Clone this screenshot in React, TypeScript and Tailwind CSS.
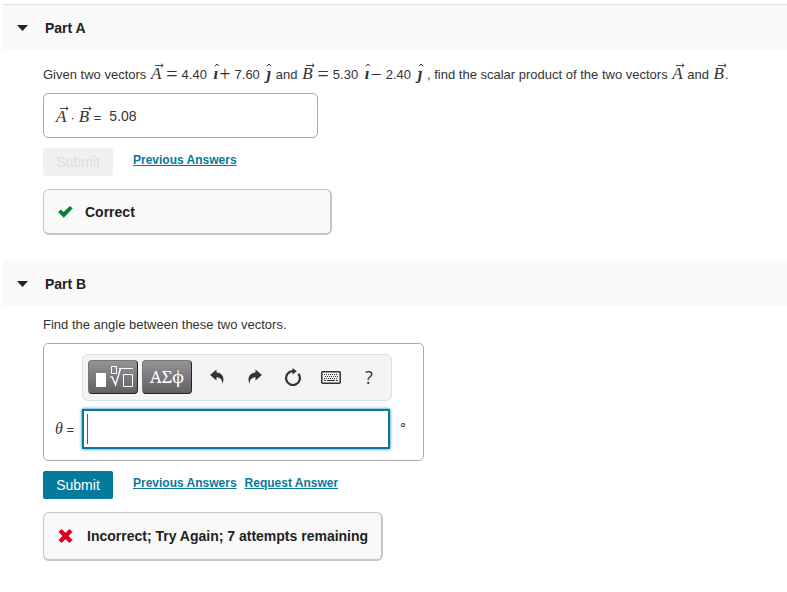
import React from "react";

interface MathSymbolProps {
  children: React.ReactNode;
}

const symbolFont = "font-['Liberation_Serif',serif] text-[17px] leading-none italic";

// Italic vector name with an arrow on top
const Vector: React.FC<MathSymbolProps> = ({ children }) => (
  <span className={`relative mx-px inline-block ${symbolFont}`}>
    {children}
    <svg
      className="absolute -top-0.5 left-1 h-[5px] w-[9px]"
      viewBox="0 0 9 5"
      fill="none"
      stroke="currentColor"
      aria-hidden="true"
    >
      <path d="M0 2.5H8M6 .7L8.2 2.5L6 4.3" strokeWidth=".9" />
    </svg>
  </span>
);

// Unit vector: dotless letter with a hat
const UnitVector: React.FC<MathSymbolProps> = ({ children }) => (
  <span className={`relative mr-px ml-[3px] inline-block font-bold ${symbolFont}`}>
    {children}
    <svg
      className="absolute -top-0.5 left-0 h-[4px] w-[6px]"
      viewBox="0 0 6 4"
      fill="none"
      stroke="currentColor"
      aria-hidden="true"
    >
      <path d="M1 3.2L3 1L5 3.2" />
    </svg>
  </span>
);

const Operator: React.FC<{ children: React.ReactNode; tight?: boolean }> = ({
  children,
  tight,
}) => (
  <span
    className={`mr-1 inline-block align-[-2px] font-['Liberation_Serif',serif] text-[20px] leading-none ${
      tight ? "" : "ml-1"
    }`}
  >
    {children}
  </span>
);

const PartHeader: React.FC<{ title: string; className?: string }> = ({
  title,
  className = "",
}) => (
  <h2 className={`bg-[#f9f9f9] ${className}`}>
    <button
      type="button"
      className="flex h-[45px] w-full items-center gap-[17px] pl-[14px] text-left text-[14px] font-bold text-[#222]"
    >
      <svg className="h-[6px] w-[11px]" viewBox="0 0 11 6" aria-hidden="true">
        <path d="M0 0H11L5.5 6Z" fill="#222" />
      </svg>
      {title}
    </button>
  </h2>
);

const TextLink: React.FC<{ children: React.ReactNode }> = ({ children }) => (
  <a href="#" className="text-[12px] leading-6 font-bold text-[#047a9c] underline">
    {children}
  </a>
);

const ToolButton: React.FC<{ label: string; children: React.ReactNode }> = ({
  label,
  children,
}) => (
  <button
    type="button"
    aria-label={label}
    className="flex h-[34px] w-[38px] items-center justify-center text-[#333]"
  >
    {children}
  </button>
);

const keypadButton =
  "flex h-[34px] w-[50px] items-center justify-center rounded-[4px] border border-[#222] border-t-[#777] border-l-[#777] bg-linear-to-b from-[#92929a] to-[#626262] text-white";

export default function App() {
  return (
    <main className="bg-white pt-1 pb-8 pl-[3px] font-['Liberation_Sans',Arial,sans-serif] text-[13px] leading-5 text-[#333]">
      <section>
        <PartHeader title="Part A" className="border-t border-[#ddd]" />
        <div className="pr-4 pl-10">
          <p className="pt-[14px]">
            Given two vectors <Vector>A</Vector>
            <Operator>=</Operator>4.40 <UnitVector>ı</UnitVector>
            <Operator tight>+</Operator>7.60 <UnitVector>ȷ</UnitVector> and{" "}
            <Vector>B</Vector>
            <Operator>=</Operator>5.30 <UnitVector>ı</UnitVector>
            <Operator tight>−</Operator>2.40 <UnitVector>ȷ</UnitVector> , find the
            scalar product of the two vectors <Vector>A</Vector> and{" "}
            <Vector>B</Vector>.
          </p>

          <div className="mt-2 flex h-[45px] max-w-[275px] items-center rounded-[5px] border border-[#aaa] px-[11px]">
            <span className="pt-1">
              <Vector>A</Vector>
              <span className="mx-[3px]">·</span>
              <Vector>B</Vector> =
            </span>
            <output className="ml-2 text-[14px]">5.08</output>
          </div>

          <div className="mt-[10px] flex items-start gap-5">
            <button
              type="button"
              disabled
              className="h-7 w-[70px] rounded-[2px] bg-[#f0f0f0] text-[14px] text-[#ddd]"
            >
              Submit
            </button>
            <TextLink>Previous Answers</TextLink>
          </div>

          <div className="mt-[13px] flex h-[46px] max-w-[289px] items-center gap-3 rounded-[6px] border border-r-2 border-b-2 border-[#c7c7c7] bg-[#f9f9f9] pl-[14px] text-[14px] font-bold text-[#222]">
            <svg className="h-[12px] w-[15px]" viewBox="0 0 15 12" aria-hidden="true">
              <path d="M0 6L3 3.4L5.6 6L12 0L14.8 2.200L5.8 11.8Z" fill="#038238" />
            </svg>
            Correct
          </div>
        </div>
      </section>

      <section className="mt-[26px]">
        <PartHeader title="Part B" />
        <div className="pr-4 pl-10">
          <p className="pt-[9px]">Find the angle between these two vectors.</p>

          <div className="mt-2 max-w-[381px] rounded-[5px] border border-[#aaa] px-[10px] pt-[10px] pb-[11px]">
            <div
              role="toolbar"
              aria-label="Equation tools"
              className="ml-7 flex h-[47px] max-w-[310px] items-center rounded-[6px] border border-[#ddd] bg-[#f4f4f4] pb-px pl-[5px]"
            >
              <button type="button" aria-label="Templates" className={keypadButton}>
                <svg
                  className="h-[24px] w-[40px]"
                  viewBox="0 0 40 24"
                  fill="none"
                  stroke="white"
                  aria-hidden="true"
                >
                  <path d="M3 8H13V22H3Z" fill="white" stroke="none" />
                  <path d="M18.5 1.5H23.5V8.5H18.5ZM30.5 9.5H39.5V21.5H30.5Z" />
                  <path d="M17 12.5L19 11.5M26 3.500H40" />
                  <path d="M19 11.5L22.5 20L27.5 3.500" strokeWidth="1.400" />
                </svg>
              </button>
              <button
                type="button"
                className={`ml-1 font-['Noto_Serif','DejaVu_Serif',serif] text-[17px] ${keypadButton}`}
              >
                ΑΣϕ
              </button>
              <div className="ml-[6px] flex">
                <ToolButton label="Undo">
                  <svg className="h-4 w-4" viewBox="0 0 16 16" fill="currentColor" aria-hidden="true">
                    <path d="M1 6L7.500 .5V3.500C13.500 3.800 16 9 13.500 15C13.300 10.500 11 8.300 7.500 8.300V11.500Z" />
                  </svg>
                </ToolButton>
                <ToolButton label="Redo">
                  <svg className="h-4 w-4" viewBox="0 0 16 16" fill="currentColor" aria-hidden="true">
                    <path d="M15 6L8.500 .5V3.500C2.500 3.800 0 9 2.500 15C2.700 10.500 5 8.300 8.500 8.300V11.500Z" />
                  </svg>
                </ToolButton>
                <ToolButton label="Reset">
                  <svg className="h-[18px] w-[18px]" viewBox="0 0 18 18" fill="none" aria-hidden="true">
                    <path d="M9 3.200A6.900 6.900 0 1 0 14.400 5.800" stroke="currentColor" strokeWidth="2.200" />
                    <path d="M8.500 0L12.800 3.300L8.500 6.600Z" fill="currentColor" />
                  </svg>
                </ToolButton>
                <ToolButton label="Keyboard shortcuts">
                  <svg className="h-[13px] w-[20px]" viewBox="0 0 20 13" fill="none" stroke="currentColor" aria-hidden="true">
                    <rect x=".75" y=".75" width="18.500" height="11.500" rx="1" strokeWidth="1.500" />
                    <path d="M3 3.500H17M4 5.500H17M3 7.500H17" strokeDasharray="1 1" />
                    <path d="M3 9.500H5M6 9.500H14M15 9.500H17" />
                  </svg>
                </ToolButton>
                <ToolButton label="Help">
                  <span className="font-['Open_Sans',sans-serif] text-[18px]">?</span>
                </ToolButton>
              </div>
            </div>

            <div className="mt-2 flex items-center">
              <label htmlFor="theta" className="w-7 shrink-0 pl-px">
                <span className="font-['Liberation_Serif',serif] text-[16px] italic">θ</span> =
              </label>
              <div className="relative max-w-[308px] grow">
                <input
                  id="theta"
                  type="text"
                  className="block h-10 w-full border-2 border-[#047a9c] bg-white px-1 shadow-[0_0_3px_#047a9c] outline-none"
                />
                <span className="absolute top-[5px] left-[5px] h-[30px] w-px bg-[#2b5fd0]" />
              </div>
              <span className="ml-[9px] self-start font-['Liberation_Serif',serif] leading-[30px]">
                ∘
              </span>
            </div>
          </div>

          <div className="mt-[10px] flex items-start gap-5">
            <button
              type="button"
              className="h-7 w-[70px] rounded-[2px] bg-[#047a9c] text-[14px] text-white"
            >
              Submit
            </button>
            <div className="flex gap-2">
              <TextLink>Previous Answers</TextLink>
              <TextLink>Request Answer</TextLink>
            </div>
          </div>

          <div className="mt-[13px] flex h-[49px] max-w-[340px] items-center gap-[14px] rounded-[6px] border border-r-2 border-b-2 border-[#c7c7c7] bg-[#f9f9f9] pl-[14px] text-[14px] font-bold text-[#222]">
            <svg className="h-[14px] w-[15px]" viewBox="0 0 15 14" aria-hidden="true">
              <path d="M3.500 0L7.500 3.800L11.500 0L14.500 3L10.500 7L14.500 11L11.500 14L7.500 10.200L3.500 14L.5 11L4.500 7L.5 3Z" fill="#db0020" />
            </svg>
            Incorrect; Try Again; 7 attempts remaining
          </div>
        </div>
      </section>
    </main>
  );
}
